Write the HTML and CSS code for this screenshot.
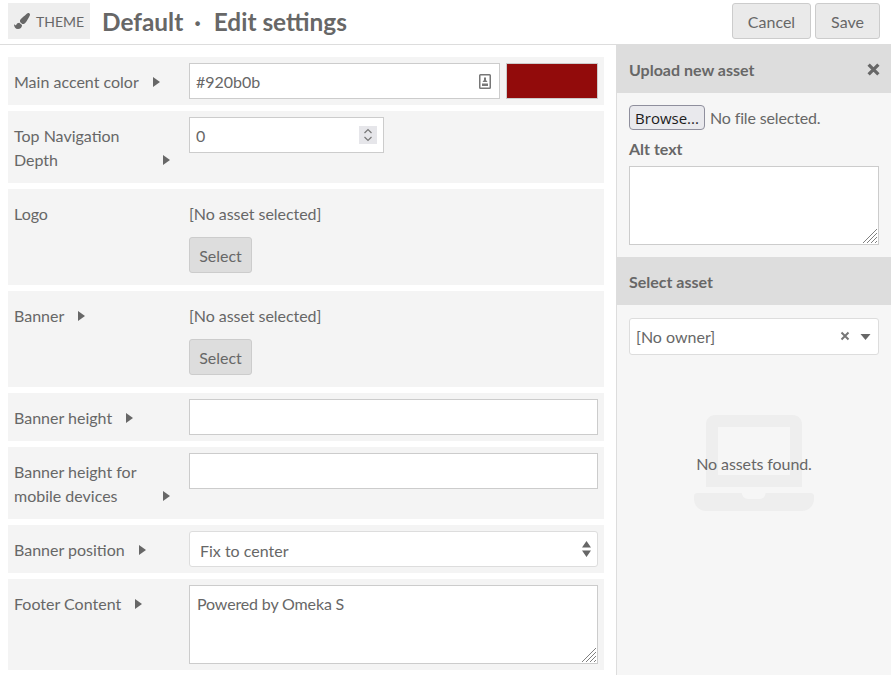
FILE: index.html
```html
<!DOCTYPE html>
<html lang="en">
<head>
    <meta charset="UTF-8">
    <meta name="viewport" content="width=device-width, initial-scale=1.0">
    <title>Theme settings</title>
    <link rel="stylesheet" href="styles.css">
</head>
<body>

    <!-- Page header -->
    <header class="page-header">
        <div class="section-badge">
            <svg class="brush-icon" viewBox="0 0 512 512"><path d="M167.02 309.34c-40.12 2.58-76.53 17.86-97.19 72.3-2.35 6.21-8 9.98-14.59 9.98-11.11 0-45.46-27.67-55.25-34.35C0 439.62 37.93 512 128 512c75.86 0 128-43.77 128-120.19 0-3.11-.65-6.08-.97-9.13l-88.01-73.34zM457.89 0c-15.16 0-29.37 6.71-40.21 16.45C213.27 199.05 192 203.34 192 257.09c0 13.7 3.25 26.76 8.73 38.7l63.82 53.18c7.21 1.8 14.64 3.03 22.39 3.03 62.11 0 98.11-45.47 211.16-256.46 7.38-14.35 13.9-29.85 13.9-45.99C512 20.64 486 0 457.89 0z"/></svg>
            <span>THEME</span>
        </div>
        <h1 class="page-title">Default <span class="title-dot">·</span> Edit settings</h1>
        <div class="page-actions">
            <button class="btn cancel-btn">Cancel</button>
            <button class="btn save-btn">Save</button>
        </div>
    </header>

    <div class="page-body">

        <!-- Settings form -->
        <form class="settings">
            <div class="field">
                <div class="field-label">
                    <span>Main accent color</span>
                    <svg class="caret" viewBox="0 0 7 10"><path d="M0 0l7 5-7 5z"/></svg>
                </div>
                <div class="field-value color-value">
                    <div class="input-wrap grow">
                        <input class="text-input" type="text" value="#920b0b">
                        <svg class="color-icon" viewBox="0 0 12 15"><path fill-rule="evenodd" d="M1.500 0h9A1.500 1.500 0 0 1 12 1.500v12a1.500 1.500 0 0 1-1.500 1.500h-9A1.500 1.500 0 0 1 0 13.500v-12A1.500 1.500 0 0 1 1.500 0zM1.500 1.500v12h9v-12zM5 3.500h2v2.500l1.500 2h-5l1.500-2zM3 9.500h6v2.500h-6z"/></svg>
                    </div>
                    <div class="swatch"></div>
                </div>
            </div>

            <div class="field">
                <div class="field-label">
                    <span>Top Navigation Depth</span>
                    <svg class="caret" viewBox="0 0 7 10"><path d="M0 0l7 5-7 5z"/></svg>
                </div>
                <div class="field-value">
                    <div class="input-wrap number-wrap">
                        <input class="text-input" type="text" value="0">
                        <div class="spinner">
                            <svg viewBox="0 0 18 18"><path d="M5.500 7L9 3.500 12.500 7M5.500 11L9 14.500 12.500 11"/></svg>
                        </div>
                    </div>
                </div>
            </div>

            <div class="field">
                <div class="field-label"><span>Logo</span></div>
                <div class="field-value asset-value">
                    <div class="asset-name">[No asset selected]</div>
                    <button type="button" class="btn select-btn">Select</button>
                </div>
            </div>

            <div class="field">
                <div class="field-label">
                    <span>Banner</span>
                    <svg class="caret" viewBox="0 0 7 10"><path d="M0 0l7 5-7 5z"/></svg>
                </div>
                <div class="field-value asset-value">
                    <div class="asset-name">[No asset selected]</div>
                    <button type="button" class="btn select-btn">Select</button>
                </div>
            </div>

            <div class="field">
                <div class="field-label">
                    <span>Banner height</span>
                    <svg class="caret" viewBox="0 0 7 10"><path d="M0 0l7 5-7 5z"/></svg>
                </div>
                <div class="field-value">
                    <input class="text-input" type="text">
                </div>
            </div>

            <div class="field">
                <div class="field-label">
                    <span>Banner height for mobile devices</span>
                    <svg class="caret" viewBox="0 0 7 10"><path d="M0 0l7 5-7 5z"/></svg>
                </div>
                <div class="field-value">
                    <input class="text-input" type="text">
                </div>
            </div>

            <div class="field">
                <div class="field-label">
                    <span>Banner position</span>
                    <svg class="caret" viewBox="0 0 7 10"><path d="M0 0l7 5-7 5z"/></svg>
                </div>
                <div class="field-value">
                    <div class="select-box position-select">
                        <span>Fix to center</span>
                        <svg class="updown" viewBox="0 0 9 16"><path d="M4.500 0L9 6.500H0zM0 9.500h9L4.500 16z"/></svg>
                    </div>
                </div>
            </div>

            <div class="field">
                <div class="field-label">
                    <span>Footer Content</span>
                    <svg class="caret" viewBox="0 0 7 10"><path d="M0 0l7 5-7 5z"/></svg>
                </div>
                <div class="field-value input-wrap">
                    <textarea class="text-area footer-area">Powered by Omeka S</textarea>
                    <svg class="grip" viewBox="0 0 14 14"><path d="M0 14L14 0M4 14L14 4M8 14L14 8M12 14L14 12"/></svg>
                </div>
            </div>
        </form>

        <!-- Asset sidebar -->
        <aside class="sidebar">
            <div class="sidebar-head">
                <span>Upload new asset</span>
                <svg class="close-icon" viewBox="0 0 12 12"><path d="M1.500 1.500l9 9M10.500 1.500l-9 9"/></svg>
            </div>
            <div class="sidebar-section">
                <div class="file-row">
                    <button class="browse-btn">Browse...</button>
                    <span>No file selected.</span>
                </div>
                <label class="side-label">Alt text</label>
                <div class="input-wrap">
                    <textarea class="text-area alt-area"></textarea>
                    <svg class="grip" viewBox="0 0 14 14"><path d="M0 14L14 0M4 14L14 4M8 14L14 8M12 14L14 12"/></svg>
                </div>
            </div>

            <div class="sidebar-head">
                <span>Select asset</span>
            </div>
            <div class="sidebar-section owner-section">
                <div class="select-box owner-select">
                    <span>[No owner]</span>
                    <svg class="clear-icon" viewBox="0 0 10 10"><path d="M1.500 1.500l7 7M8.500 1.500l-7 7"/></svg>
                    <svg class="down-icon" viewBox="0 0 10 6"><path d="M0 0h10L5 6z"/></svg>
                </div>
            </div>

            <div class="empty-state">
                <svg class="laptop-icon" viewBox="0 0 640 512"><path d="M624 416H381.540c-.74 19.810-14.710 32-32.740 32H288c-18.690 0-33.020-17.470-32.770-32H16c-8.800 0-16 7.200-16 16v16c0 35.200 28.800 64 64 64h512c35.200 0 64-28.800 64-64v-16c0-8.800-7.200-16-16-16zM576 48c0-26.400-21.600-48-48-48H112C85.600 0 64 21.600 64 48v336h512V48zm-64 272H128V64h384v256z"/></svg>
                <div class="empty-text">No assets found.</div>
            </div>
        </aside>

    </div>

</body>
</html>
```

FILE: styles.css
```css
* {
    box-sizing: border-box;
}
html, body {
    height: 100%;
}
body {
    margin: 0;
    font-family: Lato, "Open Sans", sans-serif;
    font-size: 16px;
    line-height: 24px;
    color: #676767;
    background-color: #fff;
    overflow: hidden;
}
button, input, textarea {
    font-family: inherit;
    font-size: inherit;
    color: inherit;
}

/* header */
.page-header {
    display: flex;
    align-items: flex-start;
    height: 45px;
    padding: 3px 11px 0 8px;
    border-bottom: 1px solid #ddd;
}
.section-badge {
    display: flex;
    align-items: center;
    width: 82px;
    height: 36px;
    padding: 2px 0 0 6px;
    background-color: #eee;
    font-size: 14px;
}
.brush-icon {
    width: 16px;
    height: 16px;
    margin: -2px 6px 0 0;
    fill: #676767;
}
.page-title {
    margin: 0 0 0 12px;
    font-size: 24.400px;
    line-height: 38px;
    font-weight: 700;
}
.title-dot {
    margin: 0 7px 0 5px;
}
.page-actions {
    display: flex;
    gap: 4px;
    margin-left: auto;
}
.btn {
    height: 36px;
    border: 1px solid #ccc;
    border-radius: 3px;
    background-color: #eaeaea;
    cursor: pointer;
}
.cancel-btn {
    width: 79px;
}
.save-btn {
    width: 65px;
}

/* layout */
.page-body {
    display: flex;
    height: 630px;
}
.settings {
    display: flex;
    flex-direction: column;
    gap: 6px;
    width: 616px;
    padding: 12px 12px 0 8px;
}

/* settings rows */
.field {
    display: flex;
    padding: 6px;
    background-color: #f4f4f4;
}
.field-label {
    display: flex;
    flex: 0 0 175px;
    align-self: flex-start;
    padding: 7px 19px 5px 0;
}
.caret {
    flex: none;
    align-self: flex-end;
    width: 7px;
    height: 10px;
    margin: 0 0 7px 14px;
    fill: #676767;
}
.field-value {
    flex: 1;
    min-width: 0;
}
.text-input {
    display: block;
    width: 100%;
    height: 36px;
    padding: 0 6px;
    border: 1px solid #ccc;
    background-color: #fff;
    outline: none;
}
.input-wrap {
    position: relative;
}
.color-value {
    display: flex;
    gap: 6px;
}
.grow {
    flex: 1;
}
.color-icon {
    position: absolute;
    top: 11px;
    right: 9px;
    width: 12px;
    height: 15px;
    fill: #777;
}
.swatch {
    width: 92px;
    height: 36px;
    border: 1px solid #ccc;
    background-color: #920b0b;
}
.number-wrap {
    width: 195px;
}
.spinner {
    position: absolute;
    top: 9px;
    right: 7px;
    width: 18px;
    height: 18px;
    background-color: #e6e6ea;
}
.spinner svg {
    display: block;
    width: 18px;
    height: 18px;
    fill: none;
    stroke: #777;
    stroke-width: 1.200;
}
.asset-value {
    padding: 7px 0 6px;
}
.asset-name {
    margin-bottom: 11px;
    letter-spacing: -0.05px;
}
.select-btn {
    display: block;
    width: 63px;
    background-color: #ddd;
}
.select-box {
    display: flex;
    align-items: center;
    border: 1px solid #ddd;
    border-radius: 3px;
    background-color: #fff;
}
.position-select {
    justify-content: space-between;
    height: 36px;
    padding: 3px 6px 0 10px;
}
.updown {
    width: 9px;
    height: 16px;
    margin-top: -3px;
    fill: #676767;
}
.text-area {
    display: block;
    width: 100%;
    padding: 6px 7px;
    border: 1px solid #ccc;
    background-color: #fff;
    line-height: 24px;
    letter-spacing: -0.150px;
    outline: none;
    resize: none;
}
.footer-area {
    height: 79px;
}
.grip {
    position: absolute;
    right: 2px;
    bottom: 2px;
    width: 14px;
    height: 14px;
    fill: none;
    stroke: #808080;
    stroke-width: 1;
    pointer-events: none;
}

/* sidebar */
.sidebar {
    flex: 1;
    border-left: 1px solid #ddd;
    background-color: #f6f6f6;
}
.sidebar-head {
    display: flex;
    align-items: center;
    justify-content: space-between;
    height: 48px;
    padding: 1px 11px 0 12px;
    background-color: #ddd;
    font-weight: 700;
}
.close-icon {
    width: 13px;
    height: 13px;
    margin-top: -1px;
    fill: none;
    stroke: #676767;
    stroke-width: 3;
}
.sidebar-section {
    padding: 12px;
}
.file-row {
    display: flex;
    align-items: center;
    gap: 5px;
    height: 25px;
    letter-spacing: -0.150px;
}
.browse-btn {
    width: 76px;
    height: 25px;
    padding: 0;
    border: 1px solid #8f8f9d;
    border-radius: 4px;
    background-color: #e9e9ed;
    color: #1b1b1b;
    font-family: "Open Sans", sans-serif;
    font-size: 15px;
}
.side-label {
    display: block;
    margin-top: 7px;
    margin-bottom: 5px;
    font-weight: 700;
}
.alt-area {
    height: 79px;
}
.owner-section {
    padding-top: 13px;
    padding-bottom: 0;
}
.owner-select {
    height: 37px;
    padding: 1px 6px 0;
}
.clear-icon {
    width: 10px;
    height: 10px;
    margin: -2px 2px 0 auto;
    fill: none;
    stroke: #777;
    stroke-width: 2;
}
.down-icon {
    width: 11px;
    height: 6px;
    margin: -1px 1px 0 8px;
    fill: #676767;
}
.empty-state {
    position: relative;
    width: 120px;
    height: 96px;
    margin: 60px auto 0;
}
.laptop-icon {
    display: block;
    width: 120px;
    height: 96px;
    fill: #eee;
}
.empty-text {
    position: absolute;
    top: 37px;
    left: -20px;
    right: -20px;
    text-align: center;
    letter-spacing: -0.100px;
}
```
